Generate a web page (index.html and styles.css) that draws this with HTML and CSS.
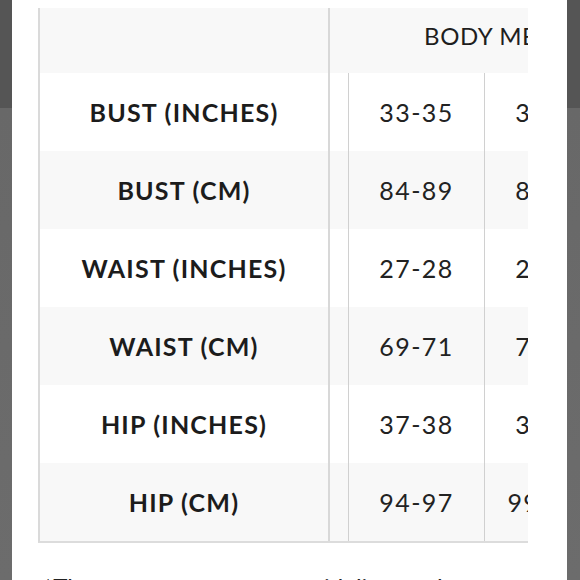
FILE: index.html
```html
<!DOCTYPE html>
<html>
<head>
<meta charset="utf-8">
<link rel="stylesheet" href="styles.css">
</head>
<body>
<div class="panel">
  <div class="scroller">
    <div class="table">
      <div class="row head">
        <div class="label"></div>
        <div class="group">BODY MEASUREMENTS</div>
      </div>
      <div class="row">
        <div class="label">BUST (INCHES)</div><div class="spacer"></div>
        <div class="val">33-35</div><div class="val">35-36</div><div class="val">37-38</div>
      </div>
      <div class="row alt">
        <div class="label">BUST (CM)</div><div class="spacer"></div>
        <div class="val">84-89</div><div class="val">89-91</div><div class="val">94-97</div>
      </div>
      <div class="row">
        <div class="label">WAIST (INCHES)</div><div class="spacer"></div>
        <div class="val">27-28</div><div class="val">29-30</div><div class="val">31-32</div>
      </div>
      <div class="row alt">
        <div class="label">WAIST (CM)</div><div class="spacer"></div>
        <div class="val">69-71</div><div class="val">74-76</div><div class="val">79-81</div>
      </div>
      <div class="row">
        <div class="label">HIP (INCHES)</div><div class="spacer"></div>
        <div class="val">37-38</div><div class="val">39-40</div><div class="val">41-42</div>
      </div>
      <div class="row alt last">
        <div class="label">HIP (CM)</div><div class="spacer"></div>
        <div class="val">94-97</div><div class="val">99-102</div><div class="val">104-107</div>
      </div>
    </div>
  </div>
  <p class="note">*The measurements are guidelines only</p>
</div>
</body>
</html>
```
FILE: styles.css
```css
html, body {
  margin: 0;
  padding: 0;
}
body {
  width: 580px;
  height: 580px;
  overflow: hidden;
  background: linear-gradient(#555555 0, #555555 108px, #686868 108px, #6c6c6c 580px);
  font-family: "Lato", "Liberation Sans", sans-serif;
}
.panel {
  margin: 0 13px 0 12px;
  height: 580px;
  background: #ffffff;
  padding: 8px 0 0 26px;
  box-sizing: border-box;
  overflow: hidden;
}
.scroller {
  width: 490px;
  overflow: hidden;
}
.table {
  width: 720px;
  border-left: 2px solid #dadada;
  border-bottom: 2px solid #dcdcdc;
}
.row {
  display: grid;
  grid-template-columns: 290px 18px 136px 136px 136px;
  height: 78px;
  background: #ffffff;
}
.row.alt {
  background: #f8f8f8;
}
.row.head {
  height: 65px;
  background: #f8f8f8;
}
.label {
  display: flex;
  align-items: center;
  justify-content: center;
  border-right: 2px solid #d8d8d8;
  font-weight: 700;
  font-size: 25px;
  letter-spacing: 1.2px;
  color: #1c1c1c;
}
.group {
  grid-column: 2 / -1;
  display: flex;
  align-items: center;
  justify-content: center;
  padding: 0 0 11px 38px;
  font-size: 24px;
  letter-spacing: 0.6px;
  color: #1e1e1e;
}
.val {
  display: flex;
  align-items: center;
  justify-content: center;
  border-left: 1px solid #d0d0d0;
  font-size: 25px;
  letter-spacing: 1.4px;
  color: #222222;
}
.note {
  margin: 29px 0 0 5px;
  font-size: 24px;
  color: #222222;
}
```
